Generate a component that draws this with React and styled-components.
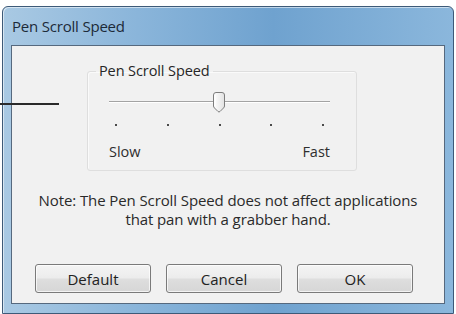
import React from 'react';
import styled, { createGlobalStyle } from 'styled-components';

const Global = createGlobalStyle`
  html, body {
    margin: 0;
    padding: 0;
    background: #ffffff;
  }
  body {
    font-family: "Open Sans", "Noto Sans", "Liberation Sans", sans-serif;
  }
`

const Page = styled.div`
  position: relative;
  width: 456px;
  height: 314px;
  padding: 6px 2px 0 2px;
  box-sizing: border-box;
  overflow: hidden;
`

const Leader = styled.div`
  position: absolute;
  left: 0;
  top: 103px;
  width: 59px;
  height: 2px;
  background: #2a2a2a;
`

const Window = styled.div`
  width: 452px;
  height: 308px;
  box-sizing: border-box;
  display: flex;
  flex-direction: column;
  padding: 0 8px 9px 8px;
  border: 1px solid #3d5a78;
  border-radius: 6px 6px 0 0;
  background: linear-gradient(to right, #a9c9e3 0%, #8ab5da 30%, #6fa2cf 60%, #8bb7dc 100%);
  box-shadow: inset 1px 1px 0 rgba(255,255,255,0.55);
`

const TitleBar = styled.div`
  height: 38px;
  display: flex;
  align-items: center;
  padding-left: 1px;
  font-size: 15px;
  color: #1c2a38;
  letter-spacing: -0.2px;
`

const Client = styled.div`
  flex: 1;
  display: flex;
  flex-direction: column;
  background: #f1f1f1;
  border: 1px solid #56697e;
  padding: 17px 0 0 0;
`

const Group = styled.fieldset`
  margin: 0 0 0 75px;
  width: 270px;
  height: 108px;
  box-sizing: border-box;
  padding: 0;
  border: 1px solid #dedede;
  border-radius: 3px;
  box-shadow: 1px 1px 0 #fafafa inset;
`

const Legend = styled.legend`
  margin-left: 8px;
  padding: 0 3px;
  font-size: 14.5px;
  line-height: 16px;
  color: #262626;
  letter-spacing: -0.1px;
`

const SliderArea = styled.div`
  position: relative;
  width: 221px;
  margin: 22px 0 0 21px;
`

const Track = styled.div`
  height: 1px;
  background: #a3a3a3;
  border-bottom: 1px solid #ffffff;
`

const ThumbWrap = styled.div`
  position: absolute;
  left: ${p => p.$pos}px;
  top: -9px;
  width: 14px;
  height: 21px;
`

const Ticks = styled.div`
  display: flex;
  justify-content: space-between;
  padding: 0 6px;
  margin-top: 21px;
`

const Tick = styled.span`
  width: 2px;
  height: 2px;
  background: #4a4a4a;
`

const Labels = styled.div`
  display: flex;
  justify-content: space-between;
  margin-top: 16px;
  font-size: 14.5px;
  line-height: 20px;
  color: #2e2e2e;
`

const Note = styled.p`
  margin: 20px 0 0 0;
  text-align: center;
  font-size: 15px;
  line-height: 19px;
  color: #2a2a2a;
  letter-spacing: -0.1px;
`

const Buttons = styled.div`
  display: flex;
  gap: 15px;
  margin-top: auto;
  margin-bottom: 10px;
  padding-left: 23px;
`

const Button = styled.button`
  width: 116px;
  height: 29px;
  border: 1px solid #7a7a7a;
  border-radius: 3px;
  background: linear-gradient(#f4f4f4 0%, #ececec 48%, #dedede 52%, #d6d6d6 100%);
  box-shadow: inset 0 0 0 1px rgba(255,255,255,0.7);
  font-family: inherit;
  font-size: 15px;
  color: #222222;
  padding: 0;
`

const Thumb = () => (
  <svg width="14" height="21" viewBox="0 0 14 21">
    <defs>
      <linearGradient id="th" x1="0" y1="0" x2="1" y2="0">
        <stop offset="0" stopColor="#ffffff" />
        <stop offset="1" stopColor="#e2e2e2" />
      </linearGradient>
    </defs>
    <path
      d="M1.5 3 Q1.5 0.5 4 0.5 H10 Q12.5 0.5 12.5 3 V14 Q12.5 15 11.5 16 L8 19.5 Q7 20.5 6 19.5 L2.5 16 Q1.5 15 1.5 14 Z"
      fill="url(#th)"
      stroke="#7d7d7d"
      strokeWidth="1"
    />
    <path d="M3 3 V14" stroke="#ffffff" strokeWidth="1" />
  </svg>
)

const App = () => {
  const ticks = [0, 1, 2, 3, 4];
  return (
    <Page>
      <Global />
      <Window>
        <TitleBar>Pen Scroll Speed</TitleBar>
        <Client>
          <Group>
            <Legend>Pen Scroll Speed</Legend>
            <SliderArea>
              <Track />
              <ThumbWrap $pos={103}>
                <Thumb />
              </ThumbWrap>
              <Ticks>
                {ticks.map(t => <Tick key={t} />)}
              </Ticks>
              <Labels>
                <span>Slow</span>
                <span>Fast</span>
              </Labels>
            </SliderArea>
          </Group>
          <Note>
            Note: The Pen Scroll Speed does not affect applications
            <br />
            that pan with a grabber hand.
          </Note>
          <Buttons>
            <Button>Default</Button>
            <Button>Cancel</Button>
            <Button>OK</Button>
          </Buttons>
        </Client>
      </Window>
      <Leader />
    </Page>
  );
};

export default App;
